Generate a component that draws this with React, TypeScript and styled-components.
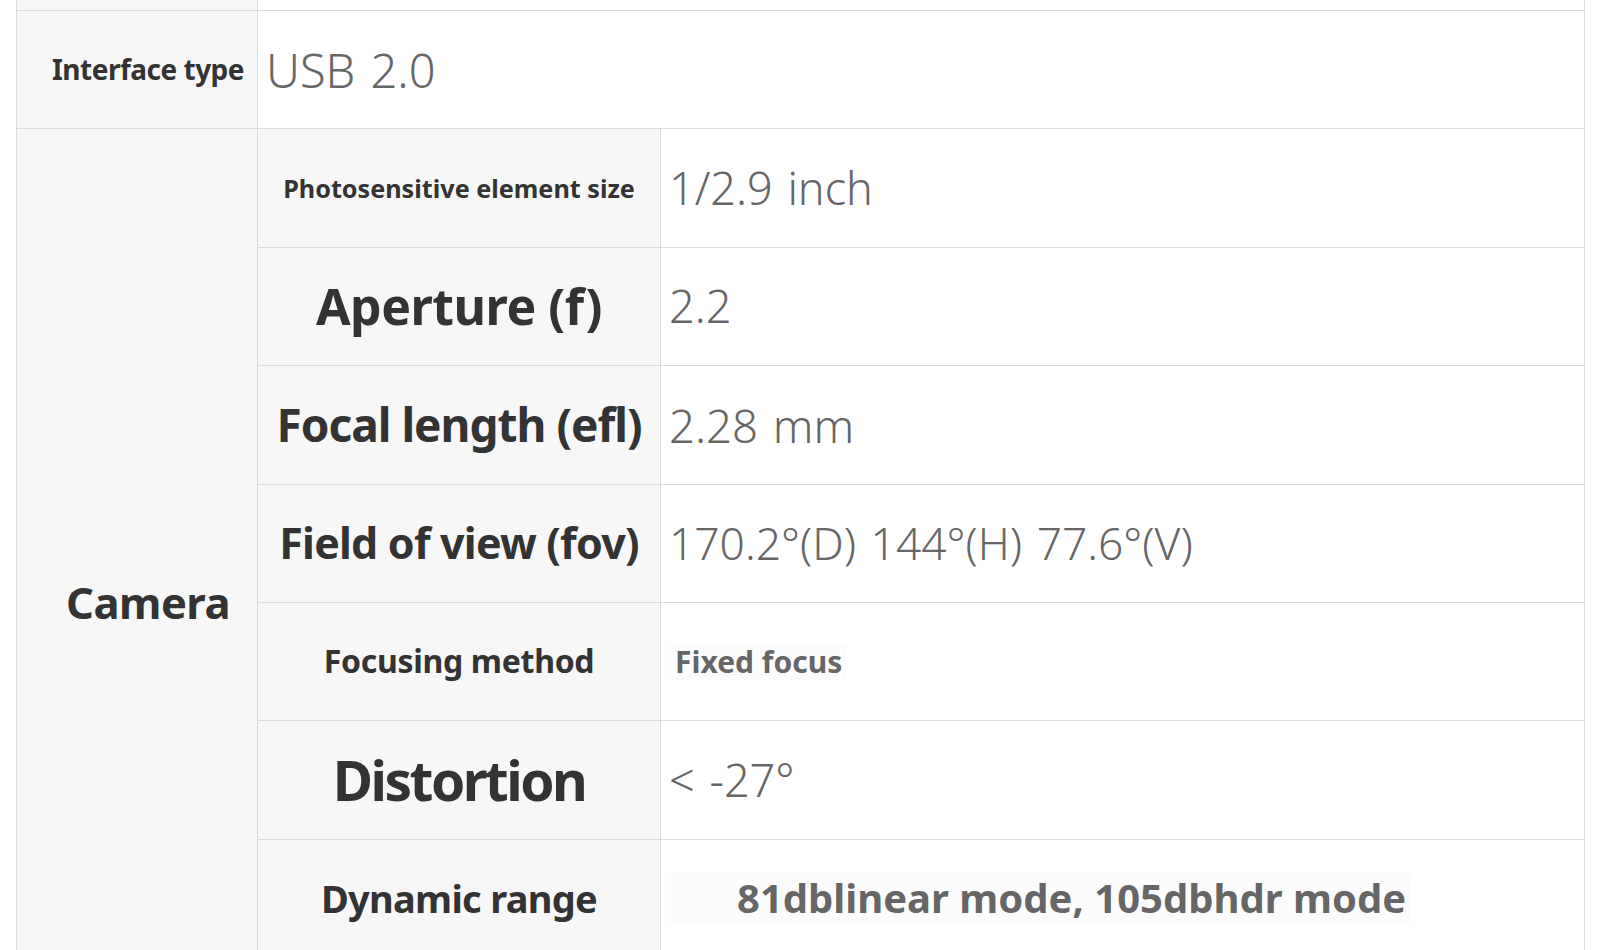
import styled, { createGlobalStyle } from 'styled-components'

type Spec = {
  label: string
  size: number
  track?: number
  value: string
  valueSize: number
  bold?: boolean
  indent?: number
}

const cameraSpecs: Spec[] = [
  { label: 'Photosensitive element size', size: 25.2, value: '1/2.9 inch', valueSize: 45 },
  { label: 'Aperture (f)', size: 50, track: -0.5, value: '2.2', valueSize: 45 },
  { label: 'Focal length (efl)', size: 46, track: -1, value: '2.28 mm', valueSize: 45.5 },
  { label: 'Field of view (fov)', size: 43, track: -0.8, value: '170.2°(D) 144°(H) 77.6°(V)', valueSize: 44.3 },
  { label: 'Focusing method', size: 32, track: -0.3, value: 'Fixed focus', valueSize: 30, bold: true },
  { label: 'Distortion', size: 55, track: -2.5, value: '< -27°', valueSize: 45 },
  { label: 'Dynamic range', size: 38, track: -0.7, value: '81dblinear mode, 105dbhdr mode', valueSize: 40, bold: true, indent: 66 },
  { label: '', size: 30, value: '', valueSize: 45 },
]

export default function App() {
  return (
    <>
      <GlobalStyle />
      <Page>
        <SpecTable>
          <GroupCell />
          <ValueCell $wide />

          <GroupCell>
            <GroupText $size={28} $track={-0.5}>Interface type</GroupText>
          </GroupCell>
          <ValueCell $wide>
            <LightValue $size={47}>USB 2.0</LightValue>
          </ValueCell>

          <GroupCell $rows={cameraSpecs.length}>
            <GroupText $size={43.5} $track={-0.5}>Camera</GroupText>
          </GroupCell>
          {cameraSpecs.map((spec, i) => (
            <Row key={i} spec={spec} />
          ))}
        </SpecTable>
      </Page>
    </>
  )
}

function Row({ spec }: { spec: Spec }) {
  return (
    <>
      <LabelCell>
        <LabelText $size={spec.size} $track={spec.track ?? 0}>
          {spec.label}
        </LabelText>
      </LabelCell>
      <ValueCell>
        {spec.bold ? (
          <BoldValue $size={spec.valueSize} $indent={spec.indent ?? 4}>{spec.value}</BoldValue>
        ) : (
          <LightValue $size={spec.valueSize}>{spec.value}</LightValue>
        )}
      </ValueCell>
    </>
  )
}

const GlobalStyle = createGlobalStyle`
  html, body {
    margin: 0;
    padding: 0;
    background: #ffffff;
    overflow: hidden;
  }

  body {
    font-family: 'Noto Sans', 'Open Sans', sans-serif;
  }
`

const Page = styled.div`
  margin-left: 16px;
  width: 1569px;
`

const SpecTable = styled.div`
  display: grid;
  grid-template-columns: 241px 403px 1fr;
  grid-template-rows: 11px;
  grid-auto-rows: 118.4px;
  border-left: 1px solid #dcdcdc;
  border-right: 1px solid #dcdcdc;
`

const GroupCell = styled.div<{ $rows?: number }>`
  grid-row: span ${props => props.$rows ?? 1};
  box-sizing: border-box;
  display: flex;
  align-items: center;
  justify-content: center;
  padding-left: 22px;
  background: #f7f7f7;
  border-right: 1px solid #dcdcdc;
  border-bottom: 1px solid #dcdcdc;
  overflow: hidden;
`

const GroupText = styled.span<{ $size: number; $track: number }>`
  color: #333333;
  font-weight: 700;
  font-size: ${props => props.$size}px;
  letter-spacing: ${props => props.$track}px;
  line-height: 1.2;
  white-space: nowrap;
`

const LabelCell = styled.div`
  box-sizing: border-box;
  display: flex;
  align-items: center;
  justify-content: center;
  background: #f7f7f7;
  border-right: 1px solid #dcdcdc;
  border-bottom: 1px solid #dcdcdc;
  overflow: hidden;
`

const LabelText = styled.span<{ $size: number; $track: number }>`
  color: #333333;
  font-weight: 700;
  font-size: ${props => props.$size}px;
  letter-spacing: ${props => props.$track}px;
  line-height: 1.2;
  white-space: nowrap;
`

const ValueCell = styled.div<{ $wide?: boolean }>`
  grid-column: span ${props => (props.$wide ? 2 : 1)};
  box-sizing: border-box;
  display: flex;
  align-items: center;
  padding-left: 8px;
  background: #ffffff;
  border-bottom: 1px solid #dcdcdc;
  overflow: hidden;
`

const LightValue = styled.span<{ $size: number }>`
  color: #666666;
  font-weight: 300;
  font-size: ${props => props.$size}px;
  word-spacing: 3px;
  line-height: 1.2;
  white-space: nowrap;
`

const BoldValue = styled.span<{ $size: number; $indent: number }>`
  color: #666666;
  font-weight: 700;
  font-size: ${props => props.$size}px;
  line-height: 1.25;
  white-space: nowrap;
  padding: 0 4px 0 ${props => props.$indent}px;
  margin-left: 2px;
  background: #fcfcfc;
`
